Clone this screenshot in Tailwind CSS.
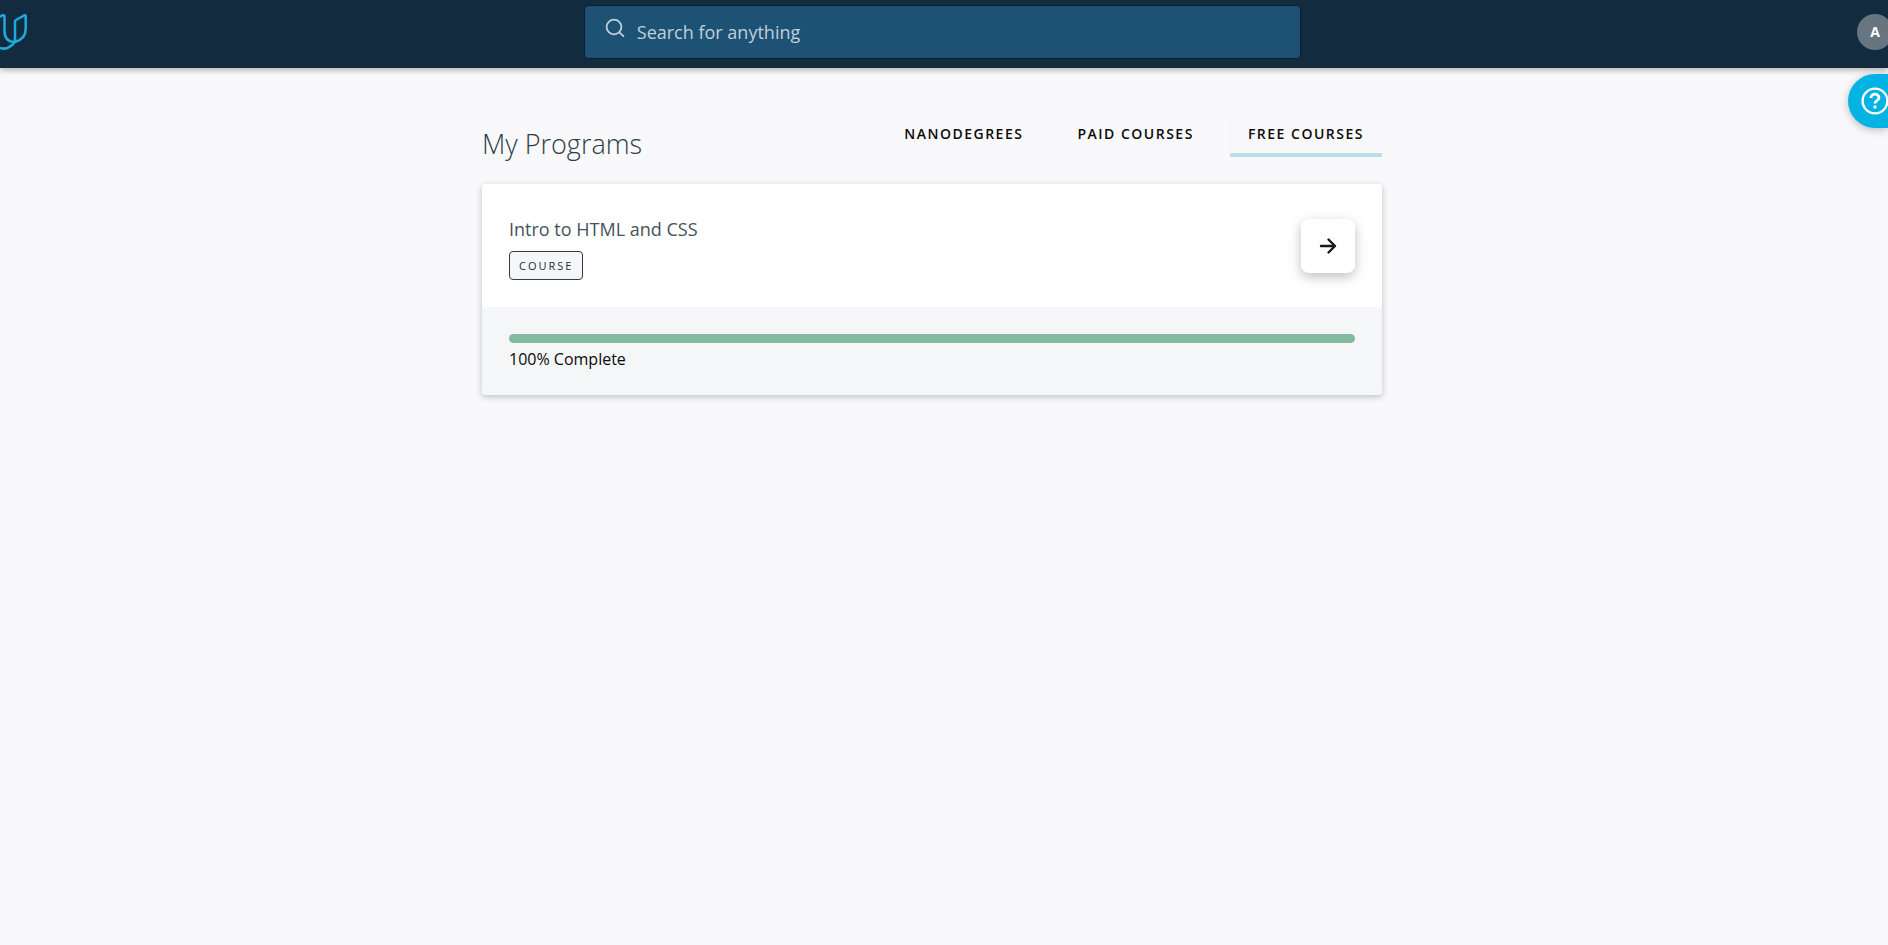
<!DOCTYPE html>
<html lang="en">
<head>
<meta charset="utf-8">
<meta name="viewport" content="width=device-width, initial-scale=1">
<title>My Programs</title>
<script src="https://cdn.jsdelivr.net/npm/@tailwindcss/browser@4"></script>
</head>
<body class="min-h-screen overflow-x-hidden bg-[#f9f9fb] font-['Open_Sans',sans-serif] text-[#0b0b0b]">
<header class="relative flex h-17 items-center justify-between bg-[#122b3e] pb-1 shadow-[0_2px_6px_rgba(0,0,0,0.3)]">
  <a href="#" aria-label="Home" class="-ml-4 block w-11">
    <svg class="h-9 w-11" viewBox="0 0 44 36" fill="none" stroke="#1cabdc" stroke-width="2.5" stroke-linejoin="round" stroke-linecap="round">
      <path d="M9 6 18.500 1.300Q20.500 0.600 20.500 2.500V17C20.500 24 24 28 31 28V7.500Q31 6.500 32 6L40 1.500Q41.700 0.800 41.700 2.500V15C41.700 22 38 26 31 28C27 33 22 36 16 34C11 32 9 27 9 20V6"/>
    </svg>
  </a>
  <form class="flex h-[54px] w-[38%] min-w-80 items-center rounded border border-[#0b1f2f] bg-[#1e5274] pl-5">
    <svg class="mb-2 size-5 shrink-0" viewBox="0 0 20 20" fill="none" stroke="#bfd0da" stroke-width="1.8" stroke-linecap="round"><circle cx="9" cy="9" r="7.4"/><path d="m14.4 14.4 4 3.8"/></svg>
    <input type="search" aria-label="Search for anything" placeholder="Search for anything" class="ml-3 h-full min-w-0 flex-1 bg-transparent text-lg text-white outline-none placeholder:text-[#bfd0da]">
  </form>
  <button aria-label="Account" class="-mr-[5px] size-9 rounded-full bg-[#66757f] text-sm font-bold text-white">A</button>
</header>
<button aria-label="Help" class="absolute top-[74px] right-0 flex h-[54px] w-10 items-center overflow-hidden rounded-l-full bg-[#02b3e4] pl-3 shadow-[0_2px_8px_rgba(0,0,0,0.25)]">
  <svg class="size-7 shrink-0" viewBox="0 0 28 28" fill="none" stroke="#fff" stroke-width="2.4"><circle cx="15" cy="14" r="12.400"/><path d="M11 11C11 6 19 6 19 10.800C19 13.500 15 13.500 15 16.500" stroke-width="2.800"/><circle cx="15" cy="20" r="1.700" fill="#fff" stroke="none"/></svg>
</button>
<main class="pt-12 pr-6">
  <div class="mx-auto max-w-[900px]">
    <div class="flex items-start justify-between">
      <h1 class="mt-2 text-[27px] leading-10 font-light text-[#2e3d49]">My Programs</h1>
      <nav class="flex gap-[18px] text-sm leading-5 font-semibold tracking-[1.5px]">
        <a href="#" class="border-b-4 border-transparent px-[18px] pt-2 pb-[9px]">NANODEGREES</a>
        <a href="#" class="border-b-4 border-transparent px-[18px] pt-2 pb-[9px]">PAID COURSES</a>
        <a href="#" aria-current="page" class="border-b-4 border-[#bbe0ea] bg-[#f8f8fa] px-[18px] pt-2 pb-[9px]">FREE COURSES</a>
      </nav>
    </div>
    <article class="mt-5 rounded bg-white shadow-[0_2px_6px_rgba(46,61,73,0.3)]">
      <div class="flex items-center justify-between px-[27px] py-[27px]">
        <div>
          <h2 class="text-lg leading-9 text-[#46515b]">Intro to HTML and CSS</h2>
          <span class="mt-1 inline-block rounded border border-[#2e3d49] bg-[#f5f6f8] px-[9px] text-[11px] leading-[27px] tracking-[2px] text-[#1f2c37]">COURSE</span>
        </div>
        <button aria-label="Open Intro to HTML and CSS" class="flex size-[54px] items-center justify-center rounded-lg bg-white shadow-[0_4px_12px_rgba(0,0,0,0.25)]">
          <svg class="size-5" viewBox="0 0 20 20" fill="none" stroke="#171a1e" stroke-width="2.400" stroke-linecap="round" stroke-linejoin="round"><path d="M3 10h14M10.500 3.500l6.500 6.500-6.500 6.500"/></svg>
        </button>
      </div>
      <div class="rounded-b bg-[#f4f6f8] px-[27px] pt-[27px] pb-6">
        <div role="progressbar" aria-label="Course progress" aria-valuenow="100" aria-valuemin="0" aria-valuemax="100" class="h-[9px] rounded-full bg-[#83ba9f]"></div>
        <p class="mt-1 text-base leading-6">100% Complete</p>
      </div>
    </article>
  </div>
</main>
</body>
</html>
